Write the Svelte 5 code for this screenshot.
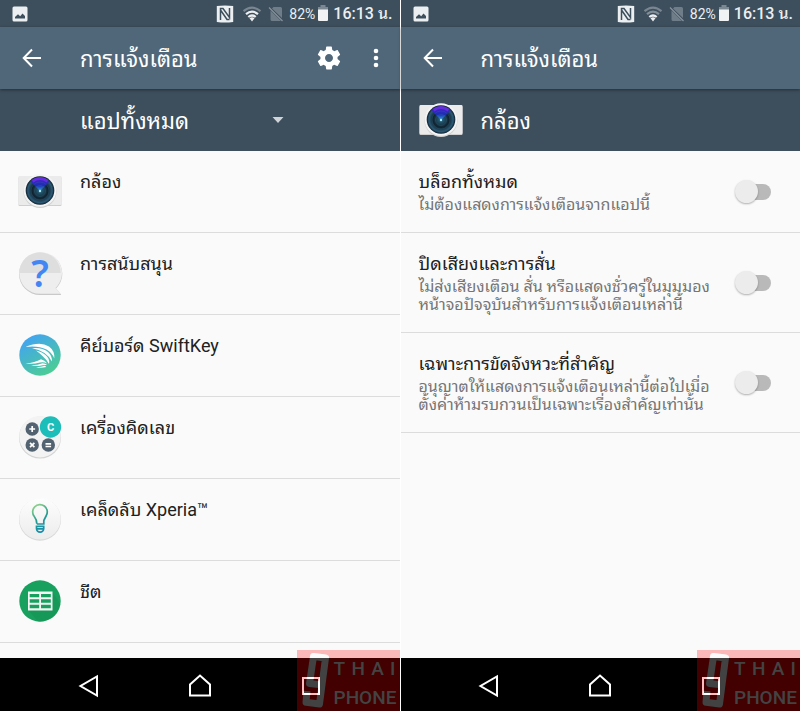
<script lang="ts">
  interface App {
    id: string;
    name: string;
  }

  interface Setting {
    id: string;
    title: string;
    summary: string[];
  }

  const apps: App[] = [
    { id: 'camera', name: 'กล้อง' },
    { id: 'support', name: 'การสนับสนุน' },
    { id: 'swiftkey', name: 'คีย์บอร์ด SwiftKey' },
    { id: 'calculator', name: 'เครื่องคิดเลข' },
    { id: 'tips', name: 'เคล็ดลับ Xperia™' },
    { id: 'sheets', name: 'ชีต' }
  ];

  const settings: Setting[] = [
    {
      id: 'block',
      title: 'บล็อกทั้งหมด',
      summary: ['ไม่ต้องแสดงการแจ้งเตือนจากแอปนี้']
    },
    {
      id: 'silent',
      title: 'ปิดเสียงและการสั่น',
      summary: ['ไม่ส่งเสียงเตือน สั่น หรือแสดงชั่วครู่ในมุมมอง', 'หน้าจอปัจจุบันสำหรับการแจ้งเตือนเหล่านี้']
    },
    {
      id: 'priority',
      title: 'เฉพาะการขัดจังหวะที่สำคัญ',
      summary: ['อนุญาตให้แสดงการแจ้งเตือนเหล่านี้ต่อไปเมื่อ', 'ตั้งค่าห้ามรบกวนเป็นเฉพาะเรื่องสำคัญเท่านั้น']
    }
  ];

  let enabled: Record<string, boolean> = $state({ block: false, silent: false, priority: false });
  let filter = $state('all');
</script>

{#snippet statusBar(weak: boolean)}
  <div class="status-bar">
    <svg class="picture" viewBox="0 0 16 16" width="16" height="16">
      <path fill="#eceff1" fill-rule="evenodd" d="M2 .5h12A1.500 1.500 0 0 1 15.500 2v12a1.500 1.500 0 0 1-1.500 1.500H2A1.500 1.500 0 0 1 .5 14V2A1.500 1.500 0 0 1 2 .5zM3 12.500h10V10L10.500 7.500 8.200 10.300 6 8.200 3 11z" />
    </svg>
    <svg class="nfc" viewBox="0 0 18 18" width="18" height="18">
      <path fill="#eceff1" d="M.8 1Q9-.2 17.200 1v16Q9 18.200.8 17z" />
      <path fill="none" stroke="#3d4e5c" stroke-width="1.500" d="M4.500 15V3.500L7 3.500L13.500 12.500V3M4.500 5L11 14.500H13.500" />
    </svg>
    <svg class="wifi" viewBox="0 0 20 16" width="20" height="16">
      <g fill="none" stroke="#eceff1" stroke-width="2.200">
        <path d="M1.500 5.200Q10-1.800 18.500 5.200" opacity=".35" />
        <path d="M4 8.200q6-5 12 0" opacity={weak ? 0.4 : 1} />
        <path d="M6.300 11q3.700-3 7.400 0" />
      </g>
      <path fill="#eceff1" d="M7.500 12.300q2.500-1.900 5 0L10 15.500z" />
    </svg>
    <svg class="sim" viewBox="0 0 16 16" width="16" height="16">
      <path fill="#6f7d88" d="M5.500 1H12.500a1.500 1.500 0 0 1 1.500 1.500V12L4 2.500zM2.500 4.500L13 15H4a1.500 1.500 0 0 1-1.500-1.500z" />
      <path stroke="#87939c" stroke-width="1.200" d="M1 1.500L14.500 15" />
    </svg>
    <span class="battery-level">82%</span>
    <svg class="battery" viewBox="0 0 12 17" width="12" height="17">
      <path fill="#7b8892" d="M3.500 0h5v2H11v4H1V2h2.500z" />
      <path fill="#f0f2f3" d="M1 4.500h10V15a1 1 0 0 1-1 1H2a1 1 0 0 1-1-1z" />
    </svg>
    <span class="clock">16:13 น.</span>
  </div>
{/snippet}

{#snippet backButton()}
  <button class="back" type="button" aria-label="กลับ">
    <svg viewBox="0 0 20 20" width="20" height="20">
      <path fill="none" stroke="#fff" stroke-width="2" d="M19 10H2.500M10 1.500L1.700 10l8.300 8.500" />
    </svg>
  </button>
{/snippet}

{#snippet appIcon(id: string)}
  <svg class="app-icon" viewBox="0 0 44 44" width="44" height="44">
    {#if id === 'camera'}
      <rect x=".5" y="8" width="43" height="29" rx="1" fill="#cfcfcf" />
      <rect x=".5" y="7" width="43" height="29" rx="1" fill="#ebebeb" />
      <circle cx="22" cy="22.500" r="16.500" fill="#d2d2d2" />
      <circle cx="22" cy="21.500" r="16.300" fill="#f4f4f4" />
      <circle cx="22" cy="21.500" r="14.300" fill="url(#lens)" />
      <path fill="url(#flare)" d="M22 22L12.500 12.500A13.400 13.400 0 0 1 31.500 12.500z" />
      <path fill="none" stroke="#7030e8" stroke-width="3" opacity=".75" d="M14.500 12.200q7.500-5.500 15 0" />
      <circle cx="22" cy="22" r="9" fill="none" stroke="#397795" stroke-width=".7" opacity=".3" />
      <circle cx="22" cy="22" r="5.500" fill="none" stroke="#4d88a4" stroke-width=".7" opacity=".3" />
      <circle cx="22" cy="22" r="1.200" fill="#a9eaf5" />
    {:else if id === 'support'}
      <path fill="#c9c9c9" d="M22 2a20.700 20.700 0 1 0 0 42H42.500q1 0 .4-.8L38 37.500A20.700 20.700 0 0 0 22 2z" />
      <path fill="#eee" d="M22 1.300a20.700 20.700 0 1 0 0 41.400H42.500L37.500 37A20.700 20.700 0 0 0 22 1.300z" />
      <path fill="#dedede" d="M1.300 22a20.700 20.700 0 0 1 41.400 0z" />
      <text class="question" x="22" y="36" text-anchor="middle">?</text>
    {:else if id === 'swiftkey'}
      <circle cx="22" cy="22" r="20.700" fill="url(#swift)" />
      <g fill="#fff">
        <path d="M7.500 14Q22 8 31 13.500Q37 18 36.300 25.500Q34 19.500 28.500 16.500Q20 12.500 7.500 14z" />
        <path d="M14 15.300Q24 14.300 30 19Q34.500 23 33.800 28.500Q31 23 26.500 20Q21 16.300 14 15.300z" />
        <path d="M18 17.500Q25 19 29 23.500Q32 27 31 31Q28 26 24.500 23Q21.500 20 18 17.500z" />
        <path d="M7.500 30.500Q17 29.500 23 26.200Q27.500 27.500 29.200 30.500Q25.500 28.500 22 29.500Q15 31.500 7.500 30.500z" />
        <path d="M13 32.200Q20 32 24.500 30.200Q28 30.500 29 32Q25 31.700 22 32.700Q17.500 33.500 13 32.200z" />
        <path d="M18 34.200Q23 34 27 32.800L28.300 34Q23 35.500 18 34.200z" />
      </g>
    {:else if id === 'calculator'}
      <circle cx="22" cy="22.600" r="21" fill="#d3d3d3" />
      <circle cx="22" cy="21.700" r="20.700" fill="#f3f3f3" />
      <circle cx="32.500" cy="12" r="10.700" fill="#1dbdb9" />
      <g fill="#536270">
        <circle cx="14.200" cy="14" r="6.700" />
        <circle cx="14.200" cy="30" r="6.700" />
        <circle cx="30.300" cy="30" r="6.700" />
      </g>
      <path stroke="#fff" stroke-width="1.700" d="M11.300 14h5.800M14.200 11.100v5.800M12 27.800l4.400 4.400M16.400 27.800L12 32.200M27.500 28.800h5.600M27.500 31.500h5.600" />
      <text class="clear" x="32.500" y="16" text-anchor="middle">C</text>
    {:else if id === 'tips'}
      <circle cx="22" cy="22.700" r="21" fill="#d8d8d8" />
      <circle cx="22" cy="21.900" r="20.700" fill="url(#disc)" />
      <g fill="none" stroke="url(#bulb)" stroke-width="1.700">
        <path d="M18.800 26.800Q18.700 22.500 16.300 19.500A7.300 7.300 0 1 1 28.300 18.500L25.800 23.500V27H18.800" />
        <path d="M18.500 29.300h7.200v2.200a3.600 3.600 0 0 1-7.200 0zM18.500 31.800h7.200" />
      </g>
    {:else if id === 'sheets'}
      <circle cx="22" cy="22" r="20.700" fill="#18a15e" />
      <path fill="#13864d" opacity=".35" d="M34.500 31.500L10.500 31.500 20 42.500A20.700 20.700 0 0 0 42.300 25L34.500 13z" />
      <path fill="#f3f3f3" fill-rule="evenodd" d="M10 12.500h24.500v19H10zM11.700 15v3.300h9.500V15zm11.300 0v3.300h9.800V15zm-11.300 5.200v3.500h9.500v-3.500zm11.300 0v3.500h9.800v-3.500zm-11.300 5.500v3.500h9.500v-3.500zm11.300 0v3.500h9.800v-3.500z" />
    {/if}
  </svg>
{/snippet}

{#snippet navBar(maskId: string)}
  <nav class="nav-bar">
    <button type="button" aria-label="ย้อนกลับ">
      <svg viewBox="0 0 24 24" width="24" height="24">
        <path fill="none" stroke="#fff" stroke-width="2" d="M20 2.500v19L3.500 12z" />
      </svg>
    </button>
    <button type="button" aria-label="หน้าแรก">
      <svg viewBox="0 0 24 24" width="24" height="24">
        <path fill="none" stroke="#fff" stroke-width="2" d="M2 21.500V10.500L12 1.500l10 9v11z" />
      </svg>
    </button>
    <button type="button" aria-label="ล่าสุด">
      <svg viewBox="0 0 24 24" width="24" height="24">
        <path fill="none" stroke="#fff" stroke-width="2" d="M4 4h16v16H4z" />
      </svg>
    </button>
  </nav>
  <div class="watermark">
    <svg viewBox="0 0 103 61" width="103" height="61" aria-hidden="true">
      <mask id={maskId}>
        <rect width="103" height="61" fill="#fff" />
        <path class="nine" stroke="#000" d="M26 35L12.500 33.500 16.500 6.500 28.500 8 22.500 54 9 52.200 10 41" />
      </mask>
      <rect width="103" height="61" fill="#f00" opacity=".26" mask="url(#{maskId})" />
      <path class="nine" stroke="#fff" opacity=".26" d="M26 35L12.500 33.500 16.500 6.500 28.500 8 22.500 54 9 52.200 10 41" />
    </svg>
    <div class="wordmark">
      <div class="thai"><span>T</span><span>H</span><span>A</span><span>I</span></div>
      <div>PHONE</div>
    </div>
  </div>
{/snippet}

<svg class="defs" width="0" height="0" aria-hidden="true">
  <defs>
    <radialGradient id="lens" cx=".5" cy=".5" r=".5">
      <stop offset="0" stop-color="#2a6b88" />
      <stop offset=".55" stop-color="#10222f" />
      <stop offset=".85" stop-color="#2b5a76" />
      <stop offset="1" stop-color="#0c1a26" />
    </radialGradient>
    <linearGradient id="flare" x1="0" y1="0" x2="0" y2="1">
      <stop offset="0" stop-color="#4c20c8" />
      <stop offset=".6" stop-color="#1a2fb4" />
      <stop offset="1" stop-color="#35a8d8" />
    </linearGradient>
    <linearGradient id="swift" x1=".2" y1="0" x2=".8" y2="1">
      <stop offset="0" stop-color="#42a2f6" />
      <stop offset="1" stop-color="#4cd08d" />
    </linearGradient>
    <linearGradient id="disc" x1="0" y1="0" x2="0" y2="1">
      <stop offset="0" stop-color="#fdfdfd" />
      <stop offset="1" stop-color="#ececec" />
    </linearGradient>
    <linearGradient id="bulb" gradientUnits="userSpaceOnUse" x1="15" y1="10" x2="29" y2="32">
      <stop offset="0" stop-color="#8cd08c" />
      <stop offset=".5" stop-color="#259c91" />
      <stop offset="1" stop-color="#168cad" />
    </linearGradient>
  </defs>
</svg>

<div class="page">
  <section class="phone">
    {@render statusBar(false)}
    <header class="app-bar">
      {@render backButton()}
      <h1>การแจ้งเตือน</h1>
      <button class="action" type="button" aria-label="การตั้งค่า">
        <svg viewBox="1.500 1.500 21 21" width="24" height="24">
          <path fill="#fff" d="M19.430 12.980c.04-.32.070-.64.070-.98s-.03-.66-.07-.98l2.110-1.650c.19-.15.24-.42.12-.64l-2-3.460c-.12-.22-.39-.3-.61-.22l-2.490 1c-.52-.4-1.080-.73-1.690-.98l-.38-2.650C14.460 2.180 14.250 2 14 2h-4c-.25 0-.46.180-.49.420l-.38 2.650c-.61.250-1.170.590-1.690.980l-2.490-1c-.23-.09-.49 0-.61.220l-2 3.460c-.13.220-.07.490.12.640l2.110 1.650c-.04.320-.07.650-.07.980s.03.660.07.980l-2.110 1.650c-.19.150-.24.420-.12.640l2 3.460c.12.220.39.300.61.220l2.490-1c.52.400 1.080.730 1.690.980l.38 2.650c.03.240.24.420.49.420h4c.25 0 .46-.18.49-.42l.38-2.650c.61-.25 1.170-.59 1.690-.98l2.490 1c.23.090.49 0 .61-.22l2-3.460c.12-.22.070-.49-.12-.64l-2.110-1.650zM12 15.500c-1.930 0-3.500-1.570-3.500-3.500s1.570-3.500 3.500-3.500 3.500 1.570 3.500 3.500-1.570 3.500-3.500 3.500z" />
        </svg>
      </button>
      <button class="action overflow" type="button" aria-label="ตัวเลือกเพิ่มเติม">
        <svg viewBox="0 0 6 20" width="6" height="20">
          <circle cx="3" cy="3" r="2.300" fill="#fff" />
          <circle cx="3" cy="10" r="2.300" fill="#fff" />
          <circle cx="3" cy="17" r="2.300" fill="#fff" />
        </svg>
      </button>
    </header>
    <div class="sub-bar filter-bar">
      <div class="filter">
        <select bind:value={filter} aria-label="ตัวกรองแอป">
          <option value="all">แอปทั้งหมด</option>
        </select>
        <svg viewBox="0 0 12 6" width="12" height="6">
          <path fill="#cfd4d8" d="M.5 0h11L6 6z" />
        </svg>
      </div>
    </div>
    <ul class="list">
      {#each apps as app (app.id)}
        <li>
          <button class="app-row" type="button">
            {@render appIcon(app.id)}
            <span class="row-title">{app.name}</span>
          </button>
        </li>
      {/each}
    </ul>
    {@render navBar('nine-left')}
  </section>

  <section class="phone second">
    {@render statusBar(true)}
    <header class="app-bar">
      {@render backButton()}
      <h1>การแจ้งเตือน</h1>
    </header>
    <div class="sub-bar">
      {@render appIcon('camera')}
      <h2>กล้อง</h2>
    </div>
    <ul class="list">
      {#each settings as setting (setting.id)}
        <li>
          <label class="setting-row" for={setting.id}>
            <span class="setting-text">
              <span class="row-title">{setting.title}</span>
              {#each setting.summary as line}
                <span class="summary">{line}</span>
              {/each}
            </span>
            <input id={setting.id} type="checkbox" role="switch" bind:checked={enabled[setting.id]} />
          </label>
        </li>
      {/each}
    </ul>
    {@render navBar('nine-right')}
  </section>
</div>

<style>
  :global(body) {
    margin: 0;
    background: #fff;
  }

  .defs {
    position: absolute;
  }

  .page {
    display: flex;
    min-height: 100vh;
    font-family: Roboto, 'Noto Sans Thai Looped', 'Noto Looped Thai', Loma, Garuda, Waree, 'Noto Sans', sans-serif;
    color: #212121;
  }

  .phone {
    position: relative;
    display: flex;
    flex: 1 1 0;
    flex-direction: column;
    box-sizing: border-box;
    min-width: 0;
    background: #fafafa;
  }

  .second {
    border-left: 1px solid #fff;
  }

  svg {
    display: block;
    flex: none;
  }

  button {
    padding: 0;
    border: none;
    background: none;
    font: inherit;
    color: inherit;
    cursor: pointer;
  }

  .status-bar {
    display: flex;
    align-items: center;
    height: 27px;
    padding: 0 7px 0 12px;
    background: #3d4e5c;
    color: #eceff1;
    line-height: 20px;
    white-space: nowrap;
  }

  .picture {
    margin-right: auto;
  }

  .wifi {
    margin: 0 6px 0 8px;
  }

  .sim {
    margin-right: 5px;
  }

  .battery-level {
    font-size: 14px;
  }

  .battery {
    margin: 0 4px 0 2px;
  }

  .clock {
    font-size: 16px;
    font-weight: 500;
  }

  .app-bar {
    position: relative;
    display: flex;
    align-items: center;
    height: 62px;
    background: #50677a;
    box-shadow: 0 1px 3px rgba(0, 0, 0, 0.4);
    color: #fff;
  }

  .back {
    width: 40px;
    margin-right: 28px;
    margin-left: 12px;
    height: 40px;
    display: grid;
    place-items: center;
  }

  h1,
  h2 {
    flex: 1;
    margin: 0;
    padding-top: 3px;
    font-size: 22px;
    font-weight: 400;
    line-height: 32px;
    white-space: nowrap;
  }

  .action {
    display: grid;
    place-items: center;
    width: 46px;
    height: 40px;
  }

  .overflow {
    width: 48px;
  }

  .sub-bar {
    display: flex;
    align-items: center;
    gap: 18px;
    height: 62px;
    padding: 0 18px;
    background: #3d4e5c;
    color: #fff;
  }

  .filter-bar {
    padding-left: 80px;
  }

  .filter {
    display: grid;
    align-items: center;
    width: 204px;
  }

  .filter > * {
    grid-area: 1 / 1;
  }

  .filter svg {
    justify-self: end;
    pointer-events: none;
  }

  select {
    width: 100%;
    padding: 3px 0 0;
    border: none;
    appearance: none;
    background: transparent;
    font: inherit;
    font-size: 22px;
    line-height: 40px;
    color: #fff;
  }

  .list {
    flex: 1;
    margin: 0;
    padding: 0;
    list-style: none;
  }

  .list li {
    border-bottom: 1px solid #dcdcdc;
  }

  .app-row {
    display: flex;
    align-items: flex-start;
    gap: 18px;
    width: 100%;
    padding: 18px 18px 19px;
    text-align: left;
  }

  .row-title {
    display: block;
    font-size: 18px;
    line-height: 26px;
  }

  .setting-row {
    display: flex;
    align-items: center;
    justify-content: space-between;
    padding: 18px 29px 18px 18px;
    cursor: pointer;
  }

  .setting-text {
    display: block;
  }

  .setting-text .row-title {
    padding-bottom: 1px;
  }

  .summary {
    display: block;
    font-size: 16px;
    line-height: 18px;
    color: #757575;
    white-space: nowrap;
  }

  input {
    display: grid;
    flex: none;
    align-items: center;
    appearance: none;
    width: 30px;
    height: 16px;
    margin: 0;
    border-radius: 8px;
    background: #b9b9b9;
    cursor: pointer;
  }

  input::before {
    content: '';
    width: 23px;
    height: 23px;
    margin: -4px 0 -4px -6px;
    border-radius: 50%;
    background: #ececec;
    box-shadow: 0 1px 2px rgba(0, 0, 0, 0.3);
  }

  input:checked::before {
    margin-left: 13px;
    background: #50677a;
  }

  .question {
    font: 600 38px 'Noto Sans', sans-serif;
    fill: #4285f4;
  }

  .app-icon {
    overflow: visible;
  }

  .clear {
    font: 700 11px Roboto, sans-serif;
    fill: #fff;
  }

  .nav-bar {
    display: flex;
    justify-content: center;
    height: 53px;
    background: #000;
  }

  .nav-bar button {
    display: grid;
    place-items: center;
    width: 111px;
    padding-top: 3px;
  }

  .watermark {
    position: absolute;
    right: 0;
    bottom: 0;
    pointer-events: none;
  }

  .nine {
    fill: none;
    stroke-width: 7;
    stroke-linejoin: round;
  }

  .wordmark {
    position: absolute;
    top: 4px;
    right: 4px;
    width: 62px;
    font-family: Roboto, sans-serif;
    font-size: 19px;
    font-weight: 500;
    line-height: 29px;
    color: #434343;
  }

  .thai {
    display: flex;
    justify-content: space-between;
  }
</style>
